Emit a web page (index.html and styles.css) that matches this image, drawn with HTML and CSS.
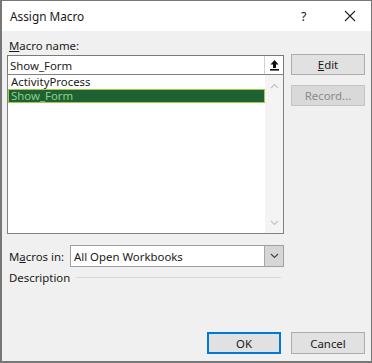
FILE: index.html
```html
<!DOCTYPE html>
<html>
<head>
    <title>Assign Macro</title>
    <link rel="stylesheet" href="styles.css">
</head>
<body>
    <div class="dialog">
        <div class="titlebar">
            <span class="title">Assign Macro</span>
            <span class="help">?</span>
            <span class="close">
                <svg width="12" height="12" viewBox="0 0 12 12"><path d="M1 1 L11 11 M11 1 L1 11" stroke="#222" stroke-width="1.1" fill="none"/></svg>
            </span>
        </div>

        <div class="content">
            <div class="main">
                <div class="left">
                    <label class="label"><u>M</u>acro name:</label>
                    <div class="namebox">
                        <span class="nametext">Show_Form</span>
                        <span class="upbtn">
                            <svg width="11" height="12" viewBox="0 0 11 12"><path d="M5.5 1 L1.5 5.5 H4 V9 H7 V5.5 H9.5 Z" fill="#111"/><rect x="1" y="10" width="9" height="1.6" fill="#111"/></svg>
                        </span>
                    </div>
                    <div class="listbox">
                        <div class="items">
                            <div class="item">ActivityProcess</div>
                            <div class="item selected">Show_Form</div>
                        </div>
                        <div class="scrollbar">
                            <svg width="9" height="6" viewBox="0 0 9 6"><path d="M1 5 L4.5 1.5 L8 5" stroke="#c4c4c4" stroke-width="1.2" fill="none"/></svg>
                            <svg width="9" height="6" viewBox="0 0 9 6"><path d="M1 1 L4.5 4.5 L8 1" stroke="#c4c4c4" stroke-width="1.2" fill="none"/></svg>
                        </div>
                    </div>
                    <div class="macros-in">
                        <label class="label">M<u>a</u>cros in:</label>
                        <div class="select">
                            <span class="selecttext">All Open Workbooks</span>
                            <span class="dropbtn">
                                <svg width="9" height="6" viewBox="0 0 9 6"><path d="M1 1 L4.5 4.5 L8 1" stroke="#444" stroke-width="1.2" fill="none"/></svg>
                            </span>
                        </div>
                    </div>
                    <div class="desc">
                        <span>Description</span>
                        <span class="rule"></span>
                    </div>
                </div>
                <div class="right">
                    <button class="btn"><u>E</u>dit</button>
                    <button class="btn disabled">Record...</button>
                </div>
            </div>
            <div class="footer">
                <button class="btn default">OK</button>
                <button class="btn">Cancel</button>
            </div>
        </div>
    </div>
</body>
</html>
```

FILE: styles.css
```css
* {
    box-sizing: border-box;
}

body {
    margin: 0;
    font-family: "Noto Sans", "Open Sans", sans-serif;
    font-size: 11.4px;
    color: #1a1a1a;
    background-color: #ffffff;
}

.dialog {
    width: 372px;
    height: 363px;
    border: 1px solid #777;
    border-left-width: 2px;
    border-bottom-width: 2px;
    background-color: #f0f0f0;
    display: flex;
    flex-direction: column;
}

.titlebar {
    height: 30px;
    background-color: #ffffff;
    display: flex;
    align-items: center;
    padding-left: 8px;
}

.title {
    flex: 1;
    font-size: 11.8px;
}

.help {
    width: 43px;
    font-size: 12.5px;
}

.close {
    width: 12px;
    display: flex;
    align-items: center;
    margin-right: 15px;
}

.content {
    flex: 1;
    display: flex;
    flex-direction: column;
    padding: 7px 6px 7px 5px;
}

.main {
    flex: 1;
    display: flex;
    gap: 7px;
}

.left {
    width: 277px;
    display: flex;
    flex-direction: column;
}

.label {
    display: block;
    height: 17px;
    line-height: 15px;
    padding-left: 2px;
}

.namebox {
    height: 20px;
    border: 1px solid #7a7a7a;
    background-color: #ffffff;
    display: flex;
    align-items: center;
}

.nametext {
    flex: 1;
    padding-left: 2px;
}

.upbtn {
    width: 19px;
    height: 18px;
    display: flex;
    align-items: center;
    justify-content: center;
    border-left: 1px solid #d0d0d0;
}

.listbox {
    height: 160px;
    margin-top: -1px;
    border: 1px solid #828282;
    background-color: #ffffff;
    display: flex;
}

.items {
    flex: 1;
    padding-top: 0;
}

.item {
    height: 14px;
    line-height: 12px;
    padding-left: 2px;
    border: 1px solid transparent;
}

.selected {
    background-color: #1f6130;
    border-color: #a6c84a;
    color: #8fd08f;
}

.scrollbar {
    width: 18px;
    background-color: #f4f4f4;
    display: flex;
    flex-direction: column;
    justify-content: space-between;
    align-items: center;
    padding: 8px 0 7px;
}

.macros-in {
    display: flex;
    align-items: center;
    margin-top: 11px;
}

.macros-in .label {
    width: 63px;
    height: auto;
}

.select {
    flex: 1;
    height: 22px;
    border: 1px solid #a0a0a0;
    background-color: #ffffff;
    display: flex;
    align-items: center;
}

.selecttext {
    flex: 1;
    padding-left: 3px;
}

.dropbtn {
    width: 19px;
    height: 20px;
    background-color: #d6d6d6;
    border-left: 1px solid #a8a8a8;
    display: flex;
    align-items: center;
    justify-content: center;
}

.desc {
    display: flex;
    align-items: center;
    gap: 6px;
    margin-top: 2px;
    padding-left: 2px;
    height: 17px;
}

.rule {
    flex: 1;
    border-top: 1px solid #d8d8d8;
    margin-right: 3px;
}

.right {
    width: 74px;
    display: flex;
    flex-direction: column;
    gap: 10px;
    padding-top: 16px;
}

.btn {
    width: 74px;
    height: 21px;
    font-family: inherit;
    font-size: 11.4px;
    color: #1a1a1a;
    background-color: #e1e1e1;
    border: 1px solid #adadad;
    padding: 0;
}

.disabled {
    color: #8a8a8a;
    background-color: #d9d9d9;
    border-color: #c4c4c4;
}

.footer {
    display: flex;
    justify-content: flex-end;
    gap: 10px;
}

.footer .btn {
    height: 22px;
}

.default {
    border: 2px solid #0078d7;
}
```
